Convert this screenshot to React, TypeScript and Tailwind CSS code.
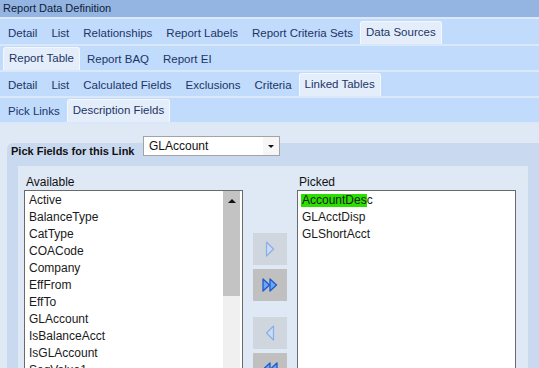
import React from 'react';

const Tab = ({ label, active }: { label: string; active?: boolean }) =>
  active ? (
    <div className="h-[23px] px-[5px] bg-[#e4eefb] border border-b-0 border-[#f4f8fe] rounded-t-[3px] flex items-center whitespace-nowrap">
      {label}
    </div>
  ) : (
    <div className="h-[23px] px-[7px] pt-[3px] flex items-center whitespace-nowrap">{label}</div>
  );

const TabRow = ({ tabs, active, pl, h }: { tabs: string[]; active: string; pl: string; h: string }) => (
  <div className={`${h} ${pl} bg-[#c0dbfc] flex items-end text-[11.5px] text-[#1d3466]`}>
    {tabs.map((t) => (
      <Tab key={t} label={t} active={t === active} />
    ))}
  </div>
);

const Sep = () => <div className="h-[2px] bg-[#dbe8fa]" />;

const ArrowRight = ({ dbl, on }: { dbl?: boolean; on?: boolean }) => {
  const stroke = on ? '#1a58d4' : '#8aaee6';
  const fill = on ? '#6fa6f4' : '#c9dcf7';
  return dbl ? (
    <svg width="16" height="14" viewBox="0 0 16 14">
      <path d="M1 1 L7.5 7 L1 13 Z" fill={fill} stroke={stroke} strokeWidth="1.3" strokeLinejoin="round" />
      <path d="M8 1 L14.5 7 L8 13 Z" fill={fill} stroke={stroke} strokeWidth="1.3" strokeLinejoin="round" />
    </svg>
  ) : (
    <svg width="10" height="16" viewBox="0 0 10 16">
      <path d="M1.5 1 L8.5 8 L1.5 15 Z" fill={fill} stroke={stroke} strokeWidth="1.2" strokeLinejoin="round" />
    </svg>
  );
};

const ArrowLeft = ({ dbl, on }: { dbl?: boolean; on?: boolean }) => {
  const stroke = on ? '#1a58d4' : '#8aaee6';
  const fill = on ? '#6fa6f4' : '#c9dcf7';
  return dbl ? (
    <svg width="16" height="14" viewBox="0 0 16 14">
      <path d="M8 1 L1.5 7 L8 13 Z" fill={fill} stroke={stroke} strokeWidth="1.3" strokeLinejoin="round" />
      <path d="M15 1 L8.5 7 L15 13 Z" fill={fill} stroke={stroke} strokeWidth="1.3" strokeLinejoin="round" />
    </svg>
  ) : (
    <svg width="10" height="16" viewBox="0 0 10 16">
      <path d="M8.5 1 L1.5 8 L8.5 15 Z" fill={fill} stroke={stroke} strokeWidth="1.2" strokeLinejoin="round" />
    </svg>
  );
};

const App = () => {
  const available = [
    'Active', 'BalanceType', 'CatType', 'COACode', 'Company', 'EffFrom', 'EffTo',
    'GLAccount', 'IsBalanceAcct', 'IsGLAccount', 'SegValue1', 'SegValue2',
  ];

  return (
    <div className="w-[539px] h-[368px] overflow-hidden bg-[#dfe8f5] font-['Liberation_Sans',Arial,sans-serif]">
      {/* Title */}
      <div className="h-[17px] bg-[#94b4e1] pl-[3px] flex items-center text-[11px] text-[#0e1c3a]">
        Report Data Definition
      </div>
      <Sep />
      <TabRow
        h="h-[25px]"
        pl="pl-[1px]"
        tabs={['Detail', 'List', 'Relationships', 'Report Labels', 'Report Criteria Sets', 'Data Sources']}
        active="Data Sources"
      />
      <Sep />
      <TabRow h="h-[24px]" pl="pl-[3px]" tabs={['Report Table', 'Report BAQ', 'Report EI']} active="Report Table" />
      <Sep />
      <TabRow
        h="h-[24px]"
        pl="pl-[1px]"
        tabs={['Detail', 'List', 'Calculated Fields', 'Exclusions', 'Criteria', 'Linked Tables']}
        active="Linked Tables"
      />
      <Sep />
      <TabRow h="h-[24px]" pl="pl-[1px]" tabs={['Pick Links', 'Description Fields']} active="Description Fields" />
      <Sep />

      {/* Group box */}
      <div className="mt-[19px] ml-[7px] bg-[#c9daf0] rounded-tl-[6px] h-[260px]">
        <div className="h-[23px] flex items-start">
          <div className="w-[136px] pl-[4px] pt-[1px] text-[11px] font-bold text-[#111] leading-[14px] whitespace-nowrap">
            Pick Fields for this Link
          </div>
          <div className="-mt-[7px] w-[137px] h-[20px] bg-white border border-[#a3a3a3] flex items-center">
            <div className="flex-1 pl-[5px] text-[12px] text-[#111]">GLAccount</div>
            <div className="w-[16px] h-full bg-[#f6f6f6] flex items-center justify-center">
              <div className="w-0 h-0 border-l-[3px] border-r-[3px] border-t-[3px] border-l-transparent border-r-transparent border-t-[#111]" />
            </div>
          </div>
        </div>

        <div className="ml-[11px] w-[510px] h-[240px] bg-[#dfe8f5] pt-[9px] pl-[6px] flex text-[12px]">
          {/* Available */}
          <div className="w-[219px] flex flex-col">
            <div className="h-[15px] pl-[2px] leading-[15px] text-[#111]">Available</div>
            <div className="h-[200px] border border-[#6a6a6a] bg-white flex">
              <div className="flex-1 pt-[1px] pl-[4px] text-[#1a1a1a]">
                {available.map((a) => (
                  <div key={a} className="h-[17px] leading-[17px]">{a}</div>
                ))}
              </div>
              <div className="w-[17px] mr-[2px] flex flex-col">
                <div className="h-[105px] bg-[#c3c3c3] flex justify-center pt-[8px]">
                  <div className="w-0 h-0 border-l-[4px] border-r-[4px] border-b-[4px] border-l-transparent border-r-transparent border-b-[#111]" />
                </div>
                <div className="flex-1 bg-[#f0f0f0]" />
              </div>
            </div>
          </div>

          {/* Move buttons */}
          <div className="w-[54px] pt-[58px] pl-[10px] flex flex-col">
            <div className="w-[34px] h-[32px] bg-[#d0d6de] flex items-center justify-center">
              <ArrowRight />
            </div>
            <div className="mt-[4px] w-[34px] h-[32px] bg-[#c0c0c0] flex items-center justify-center">
              <ArrowRight dbl on />
            </div>
            <div className="mt-[16px] w-[34px] h-[32px] bg-[#d0d6de] flex items-center justify-center">
              <ArrowLeft />
            </div>
            <div className="mt-[4px] w-[34px] h-[32px] bg-[#c0c0c0] flex items-center justify-center">
              <ArrowLeft dbl on />
            </div>
          </div>

          {/* Picked */}
          <div className="w-[219px] flex flex-col">
            <div className="h-[15px] pl-[2px] leading-[15px] text-[#111]">Picked</div>
            <div className="h-[200px] border border-[#6a6a6a] bg-white pt-[1px] pl-[3px] text-[#1a1a1a]">
              <div className="h-[17px] flex items-center">
                <span className="inline-block w-[66px] h-[13px] leading-[13px] pl-[1px] bg-[#2ae000] whitespace-nowrap overflow-visible">
                  AccountDesc
                </span>
              </div>
              <div className="h-[17px] leading-[17px] pl-[1px]">GLAcctDisp</div>
              <div className="h-[17px] leading-[17px] pl-[1px]">GLShortAcct</div>
            </div>
          </div>
        </div>
      </div>
    </div>
  );
};

export default App;
